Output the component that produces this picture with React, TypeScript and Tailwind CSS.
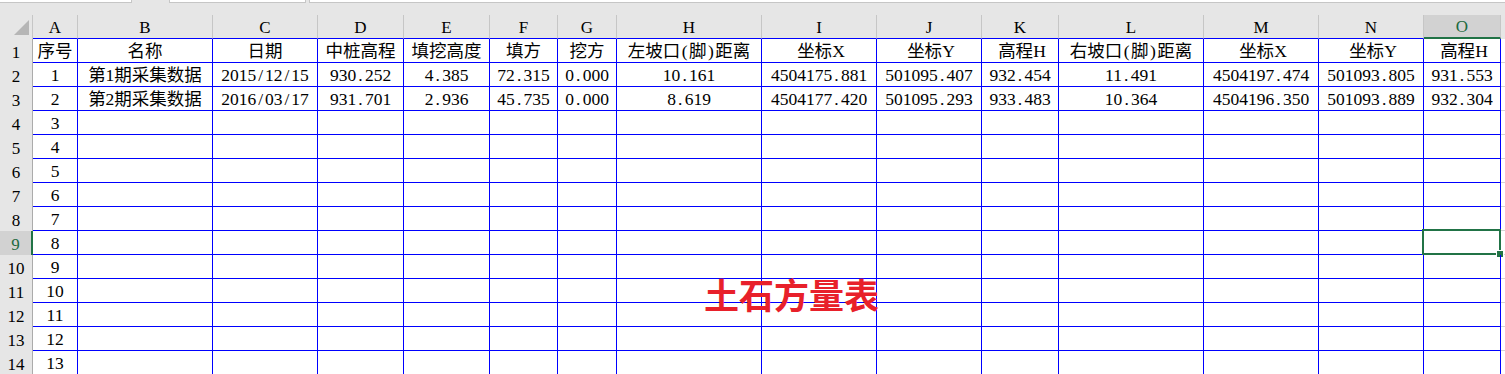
import React from "react";

const COLS = ["A", "B", "C", "D", "E", "F", "G", "H", "I", "J", "K", "L", "M", "N", "O"];

const ROW1 = ["序号", "名称", "日期", "中桩高程", "填挖高度", "填方", "挖方", "左坡口(脚)距离", "坐标X", "坐标Y", "高程H", "右坡口(脚)距离", "坐标X", "坐标Y", "高程H"];
const ROW2 = ["1", "第1期采集数据", "2015/12/15", "930.252", "4.385", "72.315", "0.000", "10.161", "4504175.881", "501095.407", "932.454", "11.491", "4504197.474", "501093.805", "931.553"];
const ROW3 = ["2", "第2期采集数据", "2016/03/17", "931.701", "2.936", "45.735", "0.000", "8.619", "4504177.420", "501095.293", "933.483", "10.364", "4504196.350", "501093.889", "932.304"];

const rows: string[][] = [ROW1, ROW2, ROW3];
for (let i = 3; i <= 13; i++) {
  const r = Array(15).fill("");
  r[0] = String(i);
  rows.push(r);
}

function T({ s }: { s: string }) {
  const parts: React.ReactNode[] = [];
  let buf = "";
  Array.from(s).forEach((c, i) => {
    const code = c.charCodeAt(0);
    if (code < 128 && !(c >= "0" && c <= "9")) {
      if (buf) {
        parts.push(buf);
        buf = "";
      }
      parts.push(
        <span key={i} className="inline-block w-[0.5em] text-center">
          {c}
        </span>
      );
    } else {
      buf += c;
    }
  });
  if (buf) parts.push(buf);
  return <>{parts}</>;
}

export default function App() {
  const grid =
    "grid grid-cols-[33px_45px_135px_105px_86px_86px_68px_59px_145px_115px_105px_77px_145px_115px_105px_77px_1fr]";
  return (
    <div className="relative w-[1505px] h-[374px] overflow-hidden bg-white text-black font-['Liberation_Serif','Noto_Sans_CJK_SC',serif]">
      {/* top strip */}
      <div className="flex h-[15px] bg-[#e6e6e6]">
        <div className="w-[132px] h-[3px] bg-white border-r border-b border-[#c6c6c6]" />
        <div className="ml-[37px] w-[137px] h-[3px] bg-white border-l border-r border-b border-[#c6c6c6]" />
        <div className="ml-[3px] flex-1 h-[3px] bg-white border-l border-b border-[#c6c6c6]" />
      </div>

      <div className={grid}>
        {/* header row */}
        <div className="h-[24px] bg-[#e6e6e6] border-r border-[#c6c6c6] relative">
          <svg className="absolute left-0 top-0" width="33" height="24" viewBox="0 0 33 24">
            <polygon points="29,5 29,20 14,20" fill="#b6b6b6" />
          </svg>
        </div>
        {COLS.map((c) => {
          const sel = c === "O";
          return (
            <div
              key={c}
              className={
                sel
                  ? "h-[24px] bg-[#d2d2d2] border-r border-[#c6c6c6] border-b-2 border-b-[#217346] flex items-center justify-center text-[17px] leading-none text-[#1d6a40] pt-[1px]"
                  : "h-[24px] bg-[#e6e6e6] border-r border-[#c6c6c6] border-b border-b-[#0000ff] flex items-center justify-center text-[17px] leading-none pt-[2px]"
              }
            >
              {c}
            </div>
          );
        })}
        <div className="h-[24px] bg-[#e6e6e6]" />

        {/* data rows */}
        {rows.map((r, ri) => {
          const rowNum = ri + 1;
          const selRow = rowNum === 9;
          return (
            <React.Fragment key={ri}>
              <div
                className={
                  selRow
                    ? "h-[24px] bg-[#d2d2d2] border-r-2 border-[#217346] flex items-center justify-center text-[17px] leading-none text-[#1d6a40] pt-[2px]"
                    : "h-[24px] bg-[#e6e6e6] border-r border-[#ababab] flex items-center justify-center text-[17px] leading-none pt-[2px]"
                }
              >
                {rowNum}
              </div>
              {r.map((v, ci) => {
                const isSel = selRow && ci === 14;
                return (
                  <div
                    key={ci}
                    className="relative h-[24px] border-r border-b border-[#0000ff] flex items-center justify-center whitespace-nowrap text-[17.5px] leading-none pt-[3px]"
                  >
                    {v ? <T s={v} /> : null}
                    {isSel ? (
                      <>
                        <div className="absolute left-[-2px] top-[-2px] right-[-1px] bottom-[-1px] border-2 border-[#217346]" />
                        <div className="absolute right-[-3px] bottom-[-3px] w-[6px] h-[6px] bg-[#217346] outline outline-1 outline-white" />
                      </>
                    ) : null}
                  </div>
                );
              })}
              <div className="h-[24px] border-b border-[#d4d4d4]" />
            </React.Fragment>
          );
        })}
      </div>

      {/* floating title text box */}
      <div className="absolute left-[704px] top-[276px] text-[35px] font-bold leading-none text-[#e8202a] font-['Noto_Sans_CJK_SC',sans-serif] whitespace-nowrap">
        土石方量表
      </div>
    </div>
  );
}
